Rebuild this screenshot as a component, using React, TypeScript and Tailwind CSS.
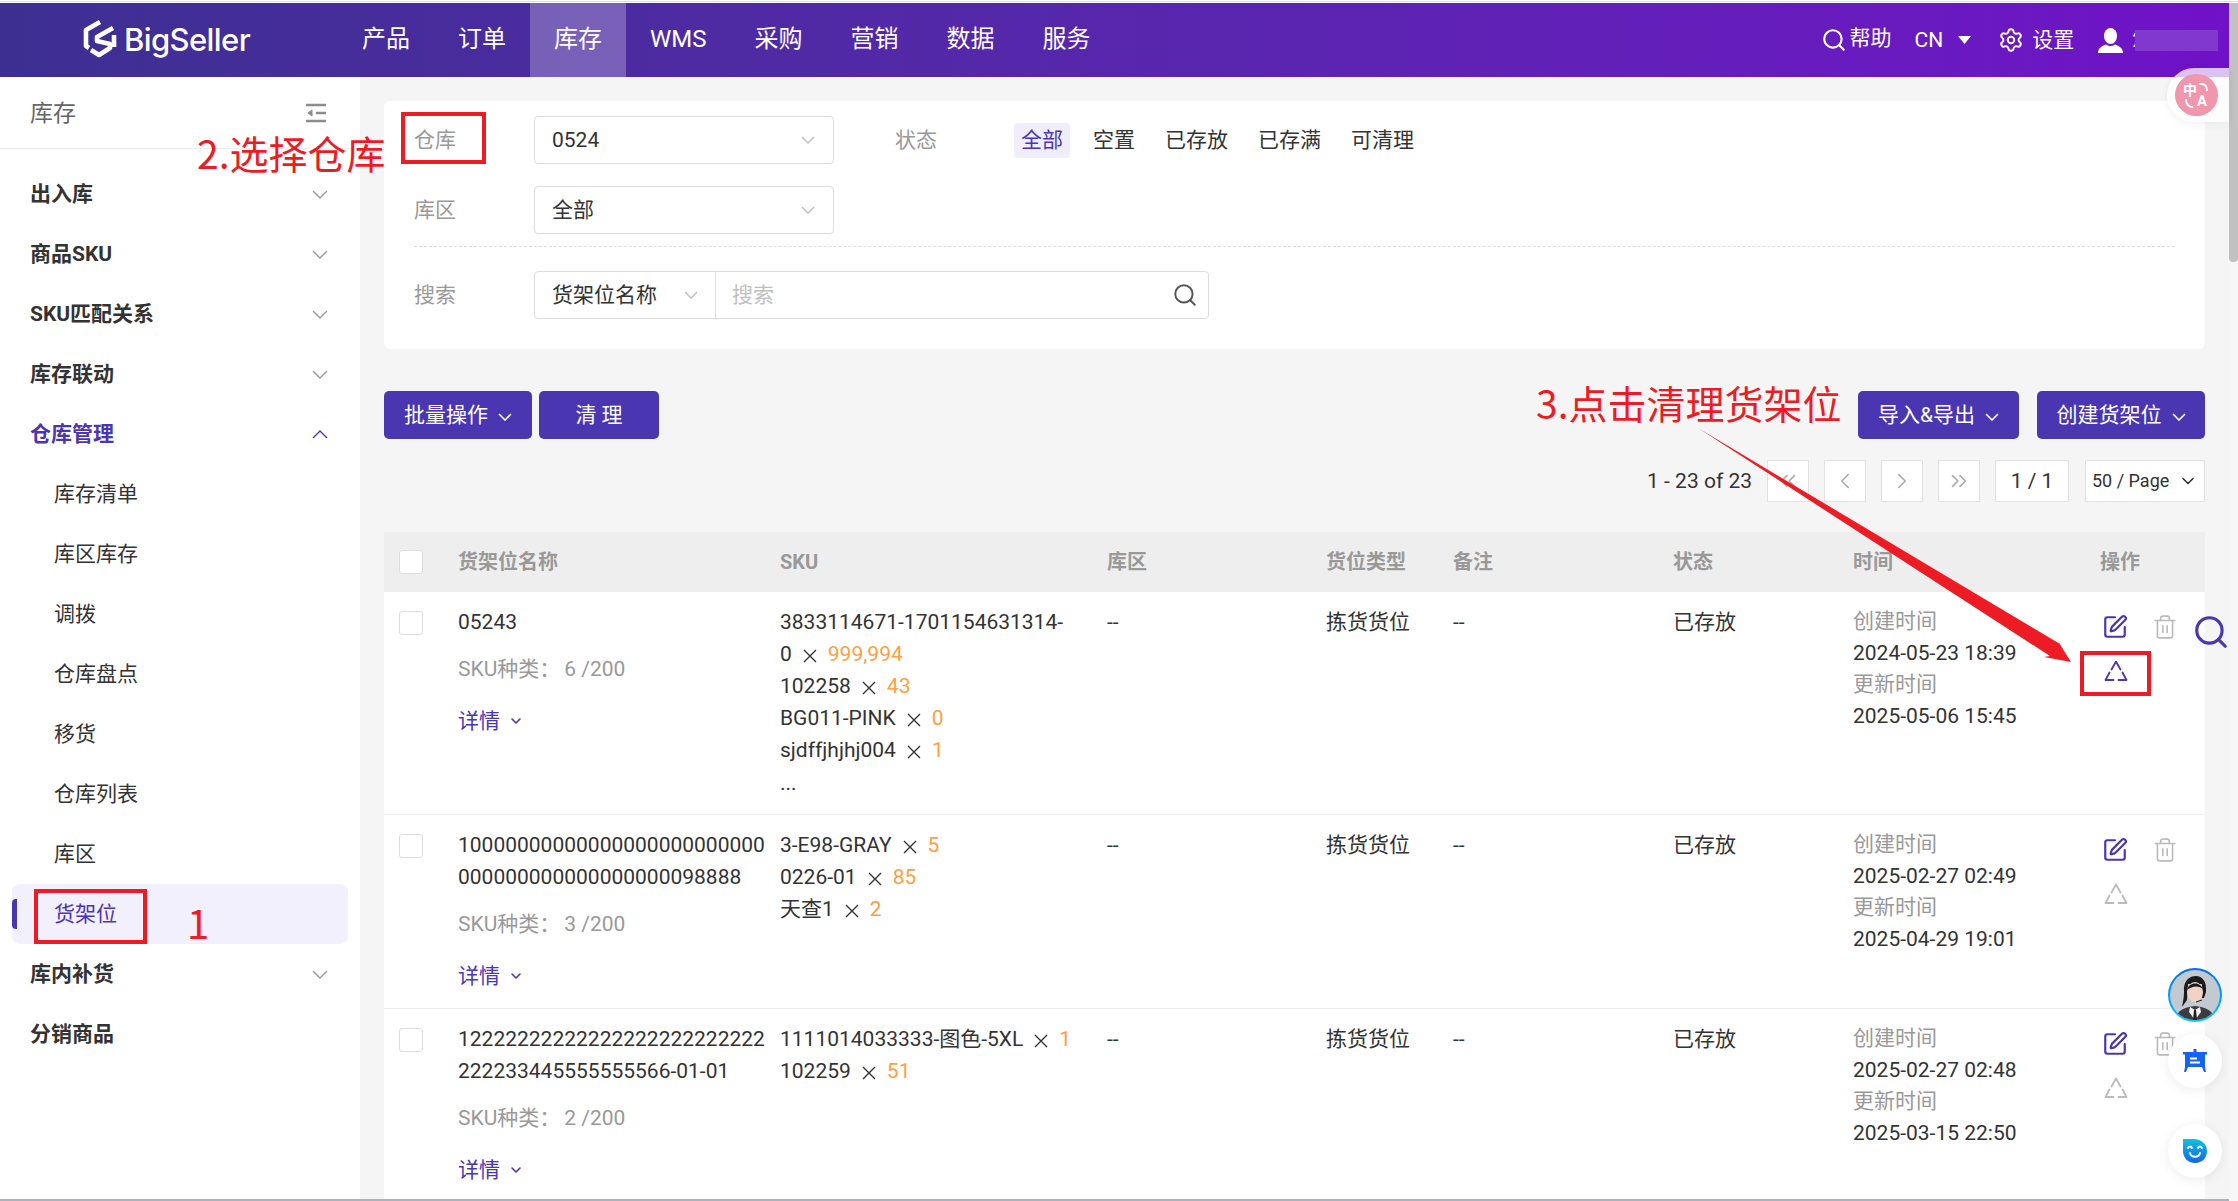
import React from "react";
import { ChevronDown, ChevronLeft, ChevronRight, ChevronsLeft, ChevronsRight, Search, Settings, SquarePen, Trash2 } from "lucide-react";

const Chev = ({ up, active }: { up?: boolean; active?: boolean }) => (
  <svg width="16" height="9" viewBox="0 0 16 9" fill="none" stroke={active ? "#4a36b0" : "#999"} strokeWidth="1.4" className={`mt-px ${up ? "rotate-180" : ""}`}>
    <path d="M1 1l7 7 7-7" />
  </svg>
);

const ThinChev = () => (
  <svg width="14" height="8" viewBox="0 0 14 8" fill="none" stroke="#bbb" strokeWidth="1.3">
    <path d="M1 1l6 6 6-6" />
  </svg>
);

const WhiteChev = () => (
  <svg width="14" height="8" viewBox="0 0 14 8" fill="none" stroke="#fff" strokeWidth="1.6" className="mt-1">
    <path d="M1 1l6 6 6-6" />
  </svg>
);

const Recycle = ({ color }: { color: string }) => (
  <svg width="24" height="22" viewBox="0 0 24 22" fill="none" stroke={color} strokeWidth="1.8" strokeLinejoin="round" strokeLinecap="round">
    <path d="M7.5 9.5L12 1.5l4.5 8" />
    <path d="M18.5 12.5l4 7.5H14.5" />
    <path d="M9.5 20H1.5l4-7.5" />
  </svg>
);

const Logo = () => (
  <svg width="36" height="40" viewBox="0 0 36 40" fill="none" stroke="#fff" strokeWidth="4.6" strokeLinejoin="round">
    <path d="M18 3L4 11v16l3 2" />
    <path d="M31 9L15 18v4l13 3v4L17 36 9 31" />
    <path d="M32 16v12" />
  </svg>
);

const menu: { label: string; bold?: boolean; chev?: "down" | "up"; active?: boolean; current?: boolean }[] = [
  { label: "出入库", bold: true, chev: "down" },
  { label: "商品SKU", bold: true, chev: "down" },
  { label: "SKU匹配关系", bold: true, chev: "down" },
  { label: "库存联动", bold: true, chev: "down" },
  { label: "仓库管理", bold: true, chev: "up", active: true },
  { label: "库存清单" },
  { label: "库区库存" },
  { label: "调拨" },
  { label: "仓库盘点" },
  { label: "移货" },
  { label: "仓库列表" },
  { label: "库区" },
  { label: "货架位", current: true },
  { label: "库内补货", bold: true, chev: "down" },
  { label: "分销商品", bold: true },
];

const nav = ["产品", "订单", "库存", "WMS", "采购", "营销", "数据", "服务"];
const statuses = ["全部", "空置", "已存放", "已存满", "可清理"];

const rows = [
  {
    name: ["05243"],
    kinds: "6 /200",
    skus: [
      ["3833114671-1701154631314-\n0", "999,994"],
      ["102258", "43"],
      ["BG011-PINK", "0"],
      ["sjdffjhjhj004", "1"],
    ],
    more: true,
    created: "2024-05-23 18:39",
    updated: "2025-05-06 15:45",
    canClean: true,
  },
  {
    name: ["10000000000000000000000000", "000000000000000000098888"],
    kinds: "3 /200",
    skus: [
      ["3-E98-GRAY", "5"],
      ["0226-01", "85"],
      ["天查1", "2"],
    ],
    created: "2025-02-27 02:49",
    updated: "2025-04-29 19:01",
  },
  {
    name: ["12222222222222222222222222", "222233445555555566-01-01"],
    kinds: "2 /200",
    skus: [
      ["1111014033333-图色-5XL", "1"],
      ["102259", "51"],
    ],
    created: "2025-02-27 02:48",
    updated: "2025-03-15 22:50",
  },
];

const Checkbox = () => <div className="h-6 w-6 rounded-[3px] border border-[#ddd] bg-white" />;

const cols = "grid grid-cols-[74px_322px_327px_219px_127px_220px_180px_247px_105px]";

export default function App() {
  return (
    <div className="relative flex h-[1201px] w-[2238px] flex-col overflow-hidden bg-[#f5f5f5] font-['Roboto','Noto_Sans_CJK_SC',sans-serif] text-[21px] leading-[32px] text-[#333]">
      <div className="h-[3px] shrink-0 border-y border-y-white bg-[#ddd]" />

      {/* Header */}
      <header className="flex h-[74px] shrink-0 items-stretch bg-gradient-to-r from-[#3d2f92] to-[#7011c8] text-white">
        <div className="flex w-[338px] items-center pb-[2px] pl-[82px]">
          <Logo />
          <span className="ml-[6px] font-['Inter',sans-serif] text-[31px] leading-none font-medium tracking-[-0.6px]">BigSeller</span>
        </div>
        <nav className="flex">
          {nav.map((n) => (
            <a key={n} className={`flex items-center px-6 pb-[2px] text-[24px] ${n === "库存" ? "bg-white/25" : ""}`}>
              {n}
            </a>
          ))}
        </nav>
        <div className="ml-auto flex items-center pr-[20px]">
          <Search size={26} strokeWidth={2} className="mr-[3px]" />
          <span className="mr-[23px] pb-[4px]">帮助</span>
          <span>CN</span>
          <svg width="13" height="8" viewBox="0 0 13 8" className="mr-[27px] ml-[15px]" fill="#fff">
            <path d="M0 0h13L6.5 8z" />
          </svg>
          <Settings size={26} strokeWidth={1.8} className="mr-[8px]" />
          <span className="mr-[24px]">设置</span>
          <svg width="25" height="25" viewBox="0 0 25 25" fill="#fff" className="mr-[9px]">
            <ellipse cx="12.5" cy="8" rx="6.5" ry="8" />
            <path d="M0 25c0-5 4-7 8-8.500 3 2 6 2 9 0 4 1.500 8 3.500 8 8.500z" />
          </svg>
          <span>2</span>
          <div className="-ml-[9px] h-[21px] w-[83px] bg-[#8038ce]" />
        </div>
      </header>

      {/* Body */}
      <div className="flex min-h-0 flex-1 border-b-2 border-b-[#a9b4c0]">
        {/* Sidebar */}
        <aside className="w-[360px] shrink-0 bg-white">
          <div className="flex h-[72px] items-center justify-between border-b border-b-[#f0f0f0] pr-[33px] pl-[30px] text-[23px] text-[#666]">
            <span className="pt-[2px]">库存</span>
            <svg width="22" height="20" viewBox="0 0 22 20" fill="none" stroke="#8c8c8c" strokeWidth="2.4">
              <path d="M1 2h20M11 10h10M1 18h20" />
              <path d="M7 7l-4 3 4 3z" fill="#8c8c8c" strokeWidth="1" />
            </svg>
          </div>
          <ul className="px-3 pt-[15px]">
            {menu.map((m) => (
              <li
                key={m.label}
                className={`relative flex h-[60px] items-center justify-between rounded-lg pr-[20px] ${m.bold ? "pl-[18px] font-bold" : "pl-[42px]"} ${m.active || m.current ? "text-[#4a36b0]" : ""} ${m.current ? "bg-[#f3f0fd]" : ""}`}
              >
                {m.current && <span className="absolute top-[15px] left-0 h-[30px] w-[5px] rounded-l bg-[#4a36b0]" />}
                <span>{m.label}</span>
                {m.chev && <Chev up={m.chev === "up"} active={m.active} />}
              </li>
            ))}
          </ul>
        </aside>

        {/* Main */}
        <main className="flex min-w-0 flex-1 flex-col pt-6 pr-[33px] pl-6">
          <section className="h-[248px] shrink-0 rounded-md bg-white px-[30px] pt-[15px]">
            <div className="flex h-12 items-center">
              <span className="w-[120px] text-[#999]">仓库</span>
              <div className="flex h-12 w-[300px] items-center justify-between rounded border border-[#ddd] pr-[18px] pl-[17px]">
                <span>0524</span>
                <ThinChev />
              </div>
              <span className="ml-[61px] w-[119px] text-[#999]">状态</span>
              <div className="flex items-center gap-4">
                {statuses.map((s, i) => (
                  <span key={s} className={`rounded px-[7px] leading-[35px] ${i === 0 ? "bg-[#f0eefb] text-[#4a36b0]" : ""}`}>
                    {s}
                  </span>
                ))}
              </div>
            </div>
            <div className="mt-[22px] flex h-12 items-center">
              <span className="w-[120px] text-[#999]">库区</span>
              <div className="flex h-12 w-[300px] items-center justify-between rounded border border-[#ddd] pr-[18px] pl-[17px]">
                <span>全部</span>
                <ThinChev />
              </div>
            </div>
            <div className="mt-3 border-t border-dashed border-t-[#ddd]" />
            <div className="mt-6 flex h-12 items-center">
              <span className="w-[120px] text-[#999]">搜索</span>
              <div className="flex h-12 w-[675px] items-center rounded border border-[#ddd]">
                <div className="flex h-full w-[181px] items-center justify-between border-r border-r-[#ddd] pr-[17px] pl-[17px]">
                  <span>货架位名称</span>
                  <ThinChev />
                </div>
                <span className="pl-[16px] text-[#c0c0c0]">搜索</span>
                <Search size={26} strokeWidth={1.8} className="mr-[10px] ml-auto text-[#555]" />
              </div>
            </div>
          </section>

          <div className="mt-[42px] flex h-12 shrink-0 items-center text-white">
            <button className="flex h-12 w-[148px] items-center justify-center gap-[10px] rounded-[5px] bg-[#4a36b0]">
              批量操作 <WhiteChev />
            </button>
            <button className="ml-[7px] h-12 w-[120px] rounded-[5px] bg-[#4a36b0]">清 理</button>
            <button className="ml-auto flex h-12 w-[161px] items-center justify-center gap-[10px] rounded-[5px] bg-[#4a36b0]">
              导入&导出 <WhiteChev />
            </button>
            <button className="ml-[18px] flex h-12 w-[168px] items-center justify-center gap-[10px] rounded-[5px] bg-[#4a36b0]">
              创建货架位 <WhiteChev />
            </button>
          </div>

          <div className="mt-[21px] flex h-[42px] shrink-0 items-center justify-end">
            <span className="mr-[15px]">1 - 23 of 23</span>
            {[ChevronsLeft, ChevronLeft, ChevronRight, ChevronsRight].map((Icon, i) => (
              <span key={i} className="mr-[15px] flex h-[42px] w-[42px] items-center justify-center border border-[#e2e2e2] bg-white text-[#aaa]">
                <Icon size={26} strokeWidth={1.5} />
              </span>
            ))}
            <span className="mr-[16px] flex h-[42px] w-[74px] items-center justify-center border border-[#e2e2e2] bg-white">1 / 1</span>
            <span className="flex h-[42px] w-[120px] items-center justify-between border border-[#e2e2e2] bg-white pr-[6px] pl-[6px] text-[18px]">
              50 / Page
              <ChevronDown size={20} strokeWidth={2} />
            </span>
          </div>

          {/* Table */}
          <div className="mt-[30px] min-h-0 flex-1 overflow-hidden bg-white">
            <div className={`${cols} h-[60px] items-center bg-[#eee] text-[20px] font-bold text-[#999]`}>
              <div className="pl-[15px]"><Checkbox /></div>
              <span>货架位名称</span>
              <span>SKU</span>
              <span>库区</span>
              <span>货位类型</span>
              <span>备注</span>
              <span>状态</span>
              <span>时间</span>
              <span>操作</span>
            </div>
            {rows.map((r, idx) => (
              <div key={idx} className={`${cols} border-b border-b-[#eee] pt-[14px] pb-[16px]`}>
                <div className="pt-[5px] pl-[15px]"><Checkbox /></div>
                <div>
                  {r.name.map((l) => <div key={l}>{l}</div>)}
                  <div className="mt-[15px] text-[#999]">
                    SKU种类：<span className="ml-1">{r.kinds}</span>
                  </div>
                  <div className="mt-5 flex items-center text-[#4a36b0]">
                    详情
                    <ChevronDown size={16} strokeWidth={2.4} className="ml-2" />
                  </div>
                </div>
                <div className="whitespace-pre-line">
                  {r.skus.map(([s, q]) => (
                    <div key={s}>
                      {s}
                      <svg width="14" height="14" viewBox="0 0 14 14" stroke="#333" strokeWidth="1.4" className="mx-[11px] inline-block align-[-2px]">
                        <path d="M1 1l12 12M13 1L1 13" />
                      </svg>
                      <span className="text-[#ff9f40]">{q}</span>
                    </div>
                  ))}
                  {r.more && <div className="h-8 pt-px">...</div>}
                </div>
                <span>--</span>
                <span>拣货货位</span>
                <span>--</span>
                <span>已存放</span>
                <div className="leading-[31.5px] whitespace-nowrap">
                  <div className="text-[#999]">创建时间</div>
                  <div>{r.created}</div>
                  <div className="text-[#999]">更新时间</div>
                  <div>{r.updated}</div>
                </div>
                <div className="pt-[8px] pl-[2px]">
                  <div className="flex items-center">
                    <SquarePen size={26} strokeWidth={2} className="text-[#4a36b0]" />
                    <Trash2 size={26} strokeWidth={1.5} className="ml-[24px] text-[#bbb]" />
                  </div>
                  <div className="mt-5 pl-[2px]">
                    <Recycle color={r.canClean ? "#4a36b0" : "#bbb"} />
                  </div>
                </div>
              </div>
            ))}
          </div>
        </main>
      </div>

      {/* Scrollbar */}
      <div className="absolute top-[3px] right-0 bottom-0 w-[9px] bg-[#f7f7f7]">
        <div className="h-[259px] rounded-b bg-[#c1c1c1]" />
      </div>

      {/* Translate widget */}
      <div className="absolute top-[68px] left-[2167px] flex h-[54px] w-[62px] items-center rounded-l-[27px] bg-white/75 pl-2 shadow-[0_2px_10px_rgba(0,0,0,0.06)]">
        <div className="relative h-[42px] w-[43px] rounded-full bg-[#f096ad] font-bold text-white">
          <span className="absolute top-[9px] left-[8px] text-[14px] leading-[14px]">中</span>
          <span className="absolute top-[20px] left-[22px] text-[15px] leading-[15px]">A</span>
          <svg width="43" height="42" viewBox="0 0 43 42" fill="none" stroke="#fff" strokeWidth="1.8" className="absolute inset-0">
            <path d="M24 10h3c3 0 5 2 5 7" />
            <path d="M11 25c0 5 2 8 7 8" />
          </svg>
        </div>
      </div>

      {/* Floating search */}
      <Search size={38} strokeWidth={2} className="absolute top-[613px] left-[2192px] text-[#4a36b0]" />

      {/* Right helpers */}
      <div className="absolute top-[968px] left-[2168px] h-[54px] w-[54px] overflow-hidden rounded-full bg-gradient-to-b from-[#0a6cf0] to-[#18c8f5] p-[2px]">
        <svg viewBox="0 0 50 50" className="h-full w-full rounded-full bg-[#c3c9d0]">
          <path d="M14 22C13 10 20 6 26 6s11 5 10 16l-2 6h-2V14H18l-1 16-5 7c1-5 2-10 2-15z" fill="#1d1a1c" />
          <ellipse cx="25" cy="22" rx="8" ry="10" fill="#f1d3c4" />
          <path d="M17 20c1-7 12-10 16-1-5-4-11-3-16 1z" fill="#1d1a1c" />
          <path d="M32 30l-6 2" stroke="#222" strokeWidth="1" fill="none" />
          <path d="M6 50c0-9 8-13 19-14 11 1 19 5 19 14z" fill="#3b3b40" />
          <path d="M20 37l5 3 5-3 1 5-6 8-6-8z" fill="#f2f2f2" />
          <path d="M24 40h2l1 10h-4z" fill="#222" />
        </svg>
      </div>
      <div className="absolute top-[1034px] left-[2168px] flex h-[54px] w-[54px] items-center justify-center rounded-full bg-white shadow-[0_2px_12px_rgba(0,0,0,0.08)]">
        <svg width="24" height="24" viewBox="0 0 24 24" fill="#1463f3">
          <path d="M0 3h24v2.500H22V18H2V5.500H0zM10.500 0h3v3h-3z" />
          <path d="M2 18h3l-2 5H1zM22 18h-3l2 5h2z" />
          <path d="M7 8.500h7v2H7zM7 12.500h10v2H7z" fill="#fff" />
        </svg>
      </div>
      <div className="absolute top-[1124px] left-[2168px] flex h-[54px] w-[54px] items-center justify-center rounded-full bg-white shadow-[0_2px_12px_rgba(0,0,0,0.08)]">
        <svg width="24" height="24" viewBox="0 0 24 24" fill="none">
          <defs>
            <linearGradient id="face" x1="0" y1="0" x2="0" y2="1">
              <stop offset="0" stopColor="#0fc4d8" />
              <stop offset="1" stopColor="#1463f3" />
            </linearGradient>
          </defs>
          <path d="M0 0h11c7 0 13 5 13 12s-5 12-12 12S0 19 0 12z" fill="url(#face)" />
          <path d="M5 9c1-2 3-2 4 0M15 9c1-2 3-2 4 0M7 14c1 5 9 5 10 0" stroke="#fff" strokeWidth="1.8" strokeLinecap="round" />
        </svg>
      </div>

      {/* Tutorial annotations */}
      <span className="absolute top-[124px] left-[197px] font-['Noto_Sans_CJK_SC',sans-serif] text-[39px] leading-[56px] text-[#ed1c24]">2.选择仓库</span>
      <span className="absolute top-[374px] left-[1536px] font-['Noto_Sans_CJK_SC',sans-serif] text-[39px] leading-[56px] text-[#ed1c24]">3.点击清理货架位</span>
      <span className="absolute top-[898px] left-[187px] font-['Noto_Sans_CJK_SC',sans-serif] text-[40px] leading-[48px] text-[#ed1c24]">1</span>
      <div className="absolute top-[112px] left-[401px] h-[52px] w-[85px] border-4 border-[#ed1c24]" />
      <div className="absolute top-[889px] left-[34px] h-[55px] w-[113px] border-4 border-[#ed1c24]" />
      <div className="absolute top-[651px] left-[2080px] h-[45px] w-[71px] border-4 border-[#ed1c24]" />
      <svg width="2238" height="1201" className="pointer-events-none absolute inset-0">
        <polygon points="1698,428 2060,644 2056,638 2071,662 2044,657 2050,656" fill="#ed1c24" />
      </svg>
    </div>
  );
}
